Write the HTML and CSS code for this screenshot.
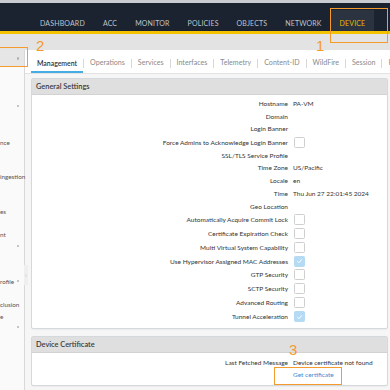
FILE: index.html
```html
<!DOCTYPE html>
<html>
<head>
<meta charset="utf-8">
<link rel="stylesheet" href="styles.css">
</head>
<body>
<header class="topbar">
  <nav class="nav">
    <span class="nav-item">DASHBOARD</span>
    <span class="nav-item">ACC</span>
    <span class="nav-item">MONITOR</span>
    <span class="nav-item">POLICIES</span>
    <span class="nav-item">OBJECTS</span>
    <span class="nav-item">NETWORK</span>
    <span class="nav-item active">DEVICE</span>
  </nav>
</header>
<div class="subbar"></div>
<div class="main">
  <aside class="sidebar">
    <div class="side-item selected"><span class="dot"></span></div>
    <div class="side-item s1"><span class="dot"></span></div>
    <div class="side-item s2">nce</div>
    <div class="side-item s3">ingestion</div>
    <div class="side-item s4">es</div>
    <div class="side-item s5">nt</div>
    <div class="side-item s6"><span class="dot"></span></div>
    <div class="side-item s7">rofile<span class="dot"></span></div>
    <div class="side-item s8">clusion</div>
    <div class="side-item s9">e</div>
    <div class="side-item s10"><span class="dot"></span></div>
    <div class="collapse">‹</div>
  </aside>
  <section class="content">
    <div class="tabs">
      <span class="tab active">Management</span><span class="sep"></span>
      <span class="tab">Operations</span><span class="sep"></span>
      <span class="tab">Services</span><span class="sep"></span>
      <span class="tab">Interfaces</span><span class="sep"></span>
      <span class="tab">Telemetry</span><span class="sep"></span>
      <span class="tab">Content-ID</span><span class="sep"></span>
      <span class="tab">WildFire</span><span class="sep"></span>
      <span class="tab">Session</span><span class="sep"></span>
      <span class="tab">HSM</span>
    </div>
    <div class="panel general">
      <div class="panel-head">General Settings</div>
      <div class="panel-body">
        <div class="row"><span class="lbl">Hostname</span><span class="val">PA-VM</span></div>
        <div class="row"><span class="lbl">Domain</span><span class="val"></span></div>
        <div class="row"><span class="lbl">Login Banner</span><span class="val"></span></div>
        <div class="row cb"><span class="lbl">Force Admins to Acknowledge Login Banner</span><span class="val"><span class="box"></span></span></div>
        <div class="row"><span class="lbl">SSL/TLS Service Profile</span><span class="val"></span></div>
        <div class="row"><span class="lbl">Time Zone</span><span class="val">US/Pacific</span></div>
        <div class="row"><span class="lbl">Locale</span><span class="val">en</span></div>
        <div class="row"><span class="lbl">Time</span><span class="val">Thu Jun 27 22:01:45 2024</span></div>
        <div class="row"><span class="lbl">Geo Location</span><span class="val"></span></div>
        <div class="row cb"><span class="lbl">Automatically Acquire Commit Lock</span><span class="val"><span class="box"></span></span></div>
        <div class="row cb"><span class="lbl">Certificate Expiration Check</span><span class="val"><span class="box"></span></span></div>
        <div class="row cb"><span class="lbl">Multi Virtual System Capability</span><span class="val"><span class="box"></span></span></div>
        <div class="row cb"><span class="lbl">Use Hypervisor Assigned MAC Addresses</span><span class="val"><span class="box checked"><svg viewBox="0 0 10 10" width="10" height="10"><path d="M2.6 5.2 L4.3 6.9 L7.6 3.2" fill="none" stroke="#fff" stroke-width="1.1"/></svg></span></span></div>
        <div class="row cb"><span class="lbl">GTP Security</span><span class="val"><span class="box"></span></span></div>
        <div class="row cb"><span class="lbl">SCTP Security</span><span class="val"><span class="box"></span></span></div>
        <div class="row cb"><span class="lbl">Advanced Routing</span><span class="val"><span class="box"></span></span></div>
        <div class="row cb"><span class="lbl">Tunnel Acceleration</span><span class="val"><span class="box checked"><svg viewBox="0 0 10 10" width="10" height="10"><path d="M2.6 5.2 L4.3 6.9 L7.6 3.2" fill="none" stroke="#fff" stroke-width="1.1"/></svg></span></span></div>
      </div>
    </div>
    <div class="panel cert">
      <div class="panel-head">Device Certificate</div>
      <div class="panel-body">
        <div class="row r12"><span class="lbl">Last Fetched Message</span><span class="val">Device certificate not found</span></div>
        <div class="row r12"><span class="lbl"></span><span class="val link">Get certificate</span></div>
      </div>
    </div>
  </section>
</div>

<div class="anno box1"></div>
<div class="anno num n1">1</div>
<div class="anno box2"></div>
<div class="anno num n2">2</div>
<div class="anno box3"></div>
<div class="anno num n3">3</div>
</body>
</html>
```

FILE: styles.css
```css
html, body {
  margin: 0;
  padding: 0;
}
body {
  width: 390px;
  height: 390px;
  overflow: hidden;
  position: relative;
  font-family: Lato, "Open Sans", "Liberation Sans", sans-serif;
  font-size: 6.5px;
  color: #333;
  background: #fff;
}

/* top navigation */
.topbar {
  height: 34px;
  box-sizing: border-box;
  border-top: 3px solid #c9ccd1;
  border-bottom: 3px solid #f3c300;
  background: #1b2230;
}
.nav {
  display: flex;
  height: 100%;
  padding-left: 31px;
}
.nav-item {
  display: flex;
  align-items: flex-end;
  padding: 0 9px 4px;
  font-size: 7px;
  letter-spacing: 0.15px;
  color: #bfc4cb;
}
.nav-item.active {
  margin-top: 7px;
  background: #2b3340;
  color: #e9b800;
}

.subbar {
  height: 16px;
  background: #e3e3e3;
}

/* main */
.main {
  display: flex;
  height: 340px;
}
.sidebar {
  position: relative;
  width: 24px;
  flex: none;
  background: #fafafa;
  border-right: 1px solid #d9d9d9;
  display: flex;
  flex-direction: column;
  color: #555;
  font-size: 6.3px;
  white-space: nowrap;
}
.side-item {
  display: flex;
  align-items: center;
  height: 10px;
  padding-right: 5px;
}
.side-item.selected {
  height: 17px;
  background: #e6e6e6;
}
.s1 { margin-top: 34px; }
.s2 { margin-top: 26px; }
.s3 { margin-top: 24px; }
.s4 { margin-top: 25px; }
.s5 { margin-top: 13px; }
.s6 { margin-top: 2px; }
.s7 { margin-top: 25px; }
.s8 { margin-top: 13px; }
.s9 { margin-top: 2px; }
.s10 { margin-top: 1px; }
.dot {
  margin-left: auto;
  width: 2.5px;
  height: 2.5px;
  border-radius: 50%;
  background: #b3b3b3;
}
.collapse {
  position: absolute;
  right: -4px;
  top: 215px;
  width: 4px;
  height: 20px;
  background: #efefef;
  color: #999;
  font-size: 5px;
  line-height: 20px;
  text-align: center;
}

.content {
  flex: 1;
  min-width: 0;
  background: #f6f6f6;
  display: flex;
  flex-direction: column;
}
.tabs {
  height: 23px;
  background: #fff;
  border-bottom: 1px solid #e3e3e3;
  display: flex;
  align-items: stretch;
  padding-left: 6px;
  white-space: nowrap;
  overflow: hidden;
}
.tab {
  display: flex;
  align-items: center;
  padding: 4px 6px 0;
  color: #8a8a8a;
  font-size: 7.1px;
  border-bottom: 2px solid transparent;
  flex: none;
}
.tab.active {
  color: #333;
  font-weight: 600;
  font-size: 6.9px;
  border-bottom-color: #45ade3;
  padding: 4px 6px 0;
}
.sep {
  align-self: center;
  margin-top: 4px;
  width: 1px;
  height: 9px;
  background: #d8d8d8;
  flex: none;
}

/* panels */
.panel {
  margin: 4px 2px 0 6px;
  background: #fff;
  border: 1px solid #d6d9dc;
  border-radius: 2px;
  box-shadow: 0 1px 1px rgba(0,0,0,0.04);
}
.panel.cert {
  margin-top: 7px;
}
.panel-head {
  height: 15px;
  line-height: 15px;
  background: #dfdfdf;
  border-bottom: 1px solid #d2d2d2;
  padding-left: 4px;
  font-size: 7.4px;
  font-weight: 600;
  color: #3a3a3a;
}
.general .panel-body {
  padding: 2px 0 4px;
}
.cert .panel-body {
  padding: 4px 0 4px;
}
.row {
  display: grid;
  grid-template-columns: 256px 1fr;
  column-gap: 5px;
  align-items: center;
  height: 12.7px;
  white-space: nowrap;
}
.row.cb { height: 13.9px; }
.row.r12 { height: 12px; }
.lbl {
  text-align: right;
  color: #333;
}
.val {
  display: flex;
  align-items: center;
  color: #333;
}
.link {
  color: #3a8ad3;
}
.box {
  width: 9px;
  height: 9px;
  border: 1px solid #cfcfcf;
  border-radius: 1.5px;
  background: #fff;
  display: flex;
  align-items: center;
  justify-content: center;
  margin-left: 1px;
}
.box.checked {
  background: #b5dbf4;
  border-color: #b5dbf4;
}
.box svg { display: block; }

/* annotations (overlays) */
.anno {
  position: absolute;
}
.box1, .box2, .box3 {
  border: 1.5px solid #f59a2c;
  box-sizing: border-box;
}
.box1 { left: 330px; top: 8px; width: 58px; height: 35px; }
.box2 { left: -2px; top: 47px; width: 30px; height: 20px; }
.box3 { left: 274px; top: 367px; width: 68px; height: 18px; }
.num {
  color: #f59a2c;
  font-family: "Liberation Sans", Arial, sans-serif;
  font-size: 15px;
  line-height: 15px;
}
.n1 { left: 316px; top: 38px; }
.n2 { left: 36px; top: 38px; }
.n3 { left: 289px; top: 342px; }
```
